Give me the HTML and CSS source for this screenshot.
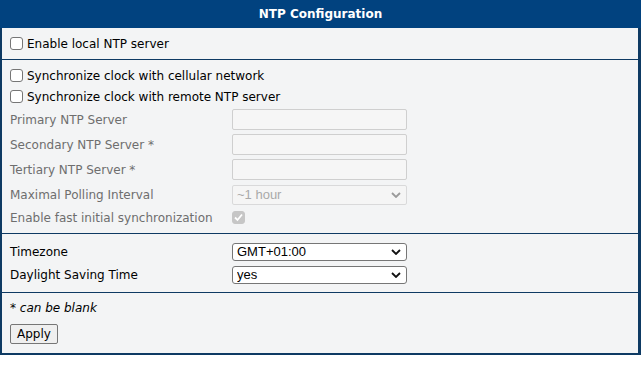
FILE: index.html
```html
<html>

<head>
	<title>NTP Configuration</title>

	<link rel="stylesheet" href="styles.css">
</head>

<body>
	<div class="panel">
		<div class="head">NTP Configuration</div>

		<div class="sec first">
			<label class="row cb"><input type="checkbox">Enable local NTP server</label>
		</div>

		<div class="sec second">
			<label class="row cb"><input type="checkbox">Synchronize clock with cellular network</label>
			<label class="row cb"><input type="checkbox">Synchronize clock with remote NTP server</label>

			<div class="row field off">
				<span class="lbl">Primary NTP Server</span>
				<input class="txt" type="text" disabled>
			</div>
			<div class="row field off">
				<span class="lbl">Secondary NTP Server *</span>
				<input class="txt" type="text" disabled>
			</div>
			<div class="row field off">
				<span class="lbl">Tertiary NTP Server *</span>
				<input class="txt" type="text" disabled>
			</div>
			<div class="row field off">
				<span class="lbl">Maximal Polling Interval</span>
				<span class="sel">
					<select disabled>
						<option>~1 hour</option>
					</select>
					<svg class="arrow" width="10" height="6" viewBox="0 0 10 6"><path d="M1 1 L5 5 L9 1" fill="none" stroke="currentColor" stroke-width="1.8"/></svg>
				</span>
			</div>
			<div class="row fast off">
				<span class="lbl">Enable fast initial synchronization</span>
				<span class="tick">
					<input type="checkbox" checked disabled>
					<svg class="mark" width="13" height="13" viewBox="0 0 13 13"><path d="M3 6.5 L5.5 9 L10 3.5" fill="none" stroke="#ffffff" stroke-width="1.8"/></svg>
				</span>
			</div>
		</div>

		<div class="sec third">
			<div class="row zone">
				<span class="lbl">Timezone</span>
				<span class="sel">
					<select>
						<option>GMT+01:00</option>
					</select>
					<svg class="arrow" width="10" height="6" viewBox="0 0 10 6"><path d="M1 1 L5 5 L9 1" fill="none" stroke="currentColor" stroke-width="1.8"/></svg>
				</span>
			</div>
			<div class="row zone">
				<span class="lbl">Daylight Saving Time</span>
				<span class="sel">
					<select>
						<option>yes</option>
					</select>
					<svg class="arrow" width="10" height="6" viewBox="0 0 10 6"><path d="M1 1 L5 5 L9 1" fill="none" stroke="currentColor" stroke-width="1.8"/></svg>
				</span>
			</div>
		</div>

		<div class="sec last">
			<p class="note">* can be blank</p>
			<button class="btn">Apply</button>
		</div>
	</div>
</body>

</html>
```

FILE: styles.css
```css
body {
	margin: 0;
	background-color: #ffffff;
	font-family: "DejaVu Sans", Verdana, sans-serif;
	font-size: 12px;
	color: #000000;
}

.panel {
	width: 641px;
	box-sizing: border-box;
	border-left: 2px solid #0e3a63;
	border-right: 3px solid #0e3a63;
	border-bottom: 2px solid #0e3a63;
	background-color: #f3f4f5;
}

.head {
	height: 28px;
	line-height: 28px;
	margin: 0 -3px 0 -2px;
	background-color: #01427f;
	color: #ffffff;
	font-weight: bold;
	text-align: center;
}

.sec {
	padding: 0 8px;
	border-bottom: 1px solid #0e3a63;
}

.sec.first {
	height: 31px;
	display: flex;
	align-items: center;
}

.sec.second {
	padding-top: 5px;
	padding-bottom: 5px;
}

.sec.third {
	padding-top: 6px;
	padding-bottom: 6px;
}

.sec.last {
	padding-top: 7px;
	height: 60px;
	box-sizing: border-box;
	border-bottom: 0;
}

.row {
	display: flex;
	align-items: center;
}

.row.cb {
	height: 21px;
}

.row.field {
	height: 25px;
}

.row.fast {
	height: 21px;
}

.row.zone {
	height: 23px;
}

input[type="checkbox"] {
	appearance: none;
	width: 13px;
	height: 13px;
	box-sizing: border-box;
	margin: 0;
	border: 1px solid #767676;
	border-radius: 3px;
	background-color: #ffffff;
}

.cb input {
	margin-right: 4px;
}

.tick {
	position: relative;
	display: inline-block;
	width: 13px;
	height: 13px;
}

.tick input {
	border-color: #c6c6c6;
	background-color: #c6c6c6;
}

.mark {
	position: absolute;
	left: 0;
	top: 0;
}

.lbl {
	width: 222px;
	flex-shrink: 0;
}

.off .lbl {
	color: #6e6e6e;
}

.txt {
	width: 175px;
	height: 21px;
	box-sizing: border-box;
	margin: 0;
	border: 1px solid #cfcfcf;
	border-radius: 2px;
	background-color: #f6f6f6;
}

.sel {
	position: relative;
	display: inline-block;
	width: 175px;
}

.sel select {
	appearance: none;
	width: 175px;
	height: 18px;
	box-sizing: border-box;
	margin: 0;
	padding: 0 0 0 4px;
	border: 1px solid #767676;
	border-radius: 3px;
	background-color: #ffffff;
	font-family: "Liberation Sans", Arial, sans-serif;
	font-size: 13px;
	color: #000000;
}

.off .sel select {
	height: 20px;
	border-color: #cfcfcf;
	border-radius: 2px;
	background-color: #f6f6f6;
	color: #8a8a8a;
}

.arrow {
	position: absolute;
	right: 6px;
	top: 6px;
	color: #111111;
	pointer-events: none;
}

.off .arrow {
	top: 7px;
	color: #9a9a9a;
}

.note {
	margin: 0;
	height: 16px;
	line-height: 16px;
	font-style: italic;
}

.btn {
	margin: 8px 0 0 0;
	height: 20px;
	padding: 0 6px;
	font-family: "DejaVu Sans", Verdana, sans-serif;
	font-size: 12px;
	color: #000000;
	background-color: #efefef;
	border: 1px solid #767676;
	border-radius: 2px;
}
```
